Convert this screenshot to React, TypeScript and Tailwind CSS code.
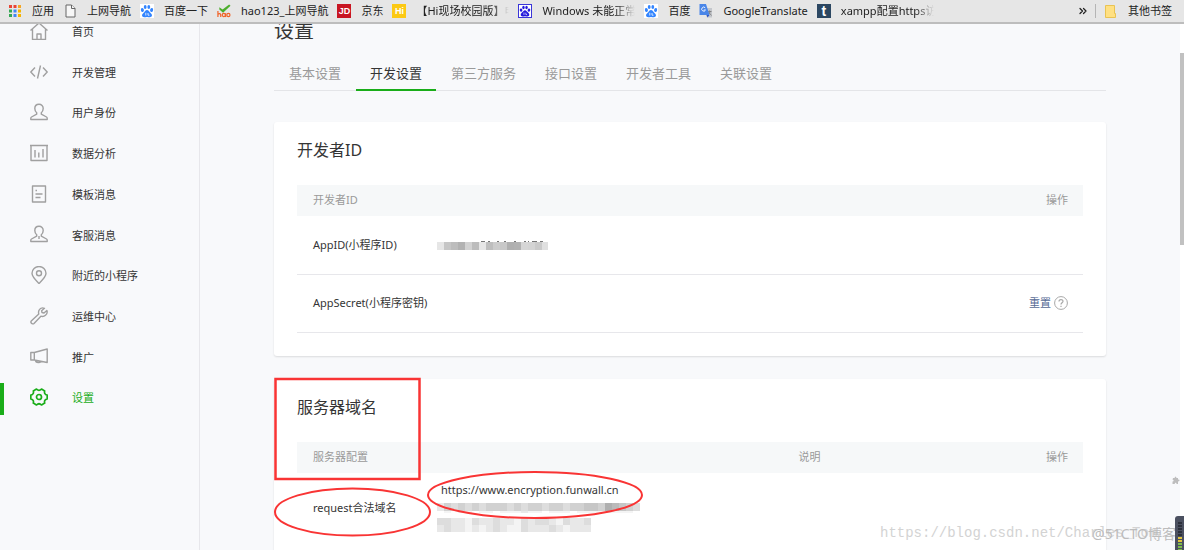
import type { ReactNode } from "react";
import { ChevronsRight } from "lucide-react";

function PawIcon({ color }: { color: string }) {
  return (
    <svg viewBox="0 0 14 14" className="size-full" fill={color}>
      <ellipse cx="2.4" cy="6" rx="1.5" ry="2" transform="rotate(-15 2.4 6)" />
      <ellipse cx="5.2" cy="3" rx="1.4" ry="2.1" />
      <ellipse cx="8.8" cy="3" rx="1.4" ry="2.1" />
      <ellipse cx="11.6" cy="6" rx="1.5" ry="2" transform="rotate(15 11.6 6)" />
      <path d="M7 6c-1.5 0-2 1.3-2.8 2.2C3.2 9.2 2 9.9 2 11.3c0 1.3 1 2 2.2 2 1 0 1.800-.3 2.800-.3s1.800.3 2.800.3c1.200 0 2.200-.7 2.200-2 0-1.400-1.200-2.100-2.200-3.100C9 7.300 8.500 6 7 6z" />
      <path d="M5.800 8.800v2.700M8 9v2.200h1.500" stroke="#fff" strokeWidth=".8" fill="none" />
    </svg>
  );
}

function AppsIcon() {
  const colors = ["#ea4335", "#ea4335", "#f5a623", "#34a853", "#4285f4", "#f5b400", "#34a853", "#4285f4", "#f5b400"];
  return (
    <svg viewBox="0 0 12 12" className="size-3">
      {colors.map((color, i) => (
        <rect key={i} x={(i % 3) * 4.5} y={Math.floor(i / 3) * 4.5} width="3" height="3" fill={color} />
      ))}
    </svg>
  );
}

function FileIcon() {
  return (
    <svg viewBox="0 0 11 14" className="h-[14px] w-[11px]" fill="#f7f7f7" stroke="#666" strokeWidth="1">
      <path d="M1 1h5.500L10 4.500V13H1z" />
      <path d="M6.500 1v3.500H10" />
    </svg>
  );
}

function HaoIcon() {
  return (
    <svg viewBox="0 0 15 14" className="size-[14px]">
      <path d="M2.500 3l3.500 2.500L13 0l1.500 1.500L6.500 9 2.500 5.500z" fill="#4cae2c" />
      <g fill="none" stroke="#f0642a" strokeWidth="1.300">
        <path d="M1 7v6.500M1 10.500q2.500-1.500 3 .5v2.500" />
        <circle cx="7.300" cy="11.300" r="1.700" />
        <path d="M9.200 9.500v4" />
        <circle cx="12.200" cy="11.300" r="1.700" />
      </g>
    </svg>
  );
}

function TranslateIcon() {
  return (
    <svg viewBox="0 0 14 14" className="size-[14px]">
      <path d="M5 4h8v9.500H8z" fill="#c4c7cc" />
      <path d="M8 7.500h4.500M10.500 6.500v1M8.500 11.500l3-4M9.500 8l3 3.500" stroke="#777" strokeWidth=".8" fill="none" />
      <path d="M.5 0h6.500L10.500 11H.5z" fill="#4a86e8" />
      <path d="M7.500 11h3L8.500 13.500z" fill="#2a56c6" />
      <path d="M6.200 3.800A2 2 0 1 0 6.500 6H4.800" stroke="#fff" strokeWidth=".9" fill="none" />
    </svg>
  );
}

function Badge({ className, children }: { className: string; children: ReactNode }) {
  return (
    <span className={`flex size-[14px] items-center justify-center font-['Liberation_Sans'] font-bold leading-none text-white ${className}`}>
      {children}
    </span>
  );
}

const bluePaw = (
  <span className="size-[14px] bg-white">
    <PawIcon color="#3385ff" />
  </span>
);

const bookmarks = [
  { label: "应用", icon: <AppsIcon /> },
  { label: "上网导航", icon: <FileIcon /> },
  { label: "百度一下", icon: bluePaw },
  { label: "hao123_上网导航", icon: <HaoIcon /> },
  { label: "京东", icon: <Badge className="bg-[#c81623] text-[9px]">JD</Badge> },
  { label: "【Hi现场校园版】申", icon: <Badge className="bg-[#fcc914] text-[9px]">Hi</Badge>, faded: true },
  {
    label: "Windows 未能正常启",
    icon: (
      <span className="size-[14px] border border-[#3a35d8] bg-white">
        <PawIcon color="#2319dc" />
      </span>
    ),
    faded: true,
  },
  { label: "百度", icon: bluePaw },
  { label: "GoogleTranslate", icon: <TranslateIcon /> },
  { label: "xampp配置https访问", icon: <Badge className="bg-[#2c4762] text-[14px]">t</Badge>, faded: true },
];

function BookmarkBar() {
  return (
    <header className="flex h-6 shrink-0 items-center border-b-2 border-[#bdbdbd] bg-[#e6e6e6] pl-2 pr-3 text-[11px] text-[#222]">
      <nav className="flex min-w-0 flex-1 items-center gap-[9px] overflow-hidden whitespace-nowrap">
        {bookmarks.map((item, i) => (
          <a key={i} href="#" className="flex shrink-0 items-center gap-[10px]">
            <span className="flex w-[14px] justify-center">{item.icon}</span>
            <span
              className={
                item.faded
                  ? "w-[93px] overflow-hidden [mask-image:linear-gradient(to_right,black_80%,transparent)]"
                  : ""
              }
            >
              {item.label}
            </span>
          </a>
        ))}
      </nav>
      <button type="button" aria-label="更多书签" className="mr-[6px]">
        <ChevronsRight className="size-3" strokeWidth={2.5} />
      </button>
      <span className="mr-[9px] h-[14px] w-px bg-[#b5b5b5]" />
      <a href="#" className="flex items-center gap-3">
        <svg viewBox="0 0 11 13" className="h-[13px] w-[11px]">
          <path d="M.5.5h9v8h1v4H.5z" fill="#ffe082" stroke="#e9c352" />
        </svg>
        其他书签
      </a>
    </header>
  );
}

const personPath =
  "M9 1.300c-2.500 0-4.200 1.800-4.200 4.200 0 1.800.8 3.200 1.900 4.200v1.500L1.500 14c-.5.300-.7.700-.7 1.200v1.300h16.400v-1.300c0-.5-.2-.9-.7-1.200l-5.200-2.800V9.700c1.100-1 1.900-2.400 1.900-4.200C13.200 3.100 11.500 1.300 9 1.300z";

const menu: { label: string; icon: ReactNode }[] = [
  { label: "首页", icon: <path d="M.5 8.500L9 1l8.500 7.500M2.500 7v10.500h13V7M7 17.500V12h4v5.500" /> },
  { label: "开发管理", icon: <path d="M5 4.500L.8 9 5 13.500M13 4.500L17.200 9 13 13.500M10.500 2.500l-3 13" /> },
  { label: "用户身份", icon: <path d={personPath} /> },
  { label: "数据分析", icon: <path d="M0 1.500h18M1 1.500v15h16v-15M5 6v7.500M8.800 8.500v5M13 5v8.500" /> },
  { label: "模板消息", icon: <path d="M2.500 1h13v16h-13zM5.500 5.500h1.500M5.500 9h7M5.500 12.500h5" /> },
  {
    label: "客服消息",
    icon: (
      <>
        <path d={personPath} />
        <path d="M9 11v3" />
      </>
    ),
  },
  {
    label: "附近的小程序",
    icon: (
      <>
        <path d="M9 17.500C5.500 14 2 10.800 2 7.300a7 6.800 0 0 1 14 0c0 3.500-3.500 6.700-7 10.200z" />
        <circle cx="9" cy="7.300" r="2.500" />
      </>
    ),
  },
  {
    label: "运维中心",
    icon: <path d="M14.500 1.300c-2.200-.8-4.500 0-5.500 2-.6 1.300-.6 2.500-.2 3.700L1.500 13.700c-1.600 1.600.8 4.300 2.500 2.700l6.900-7.200c1.500.5 3.300.2 4.600-.9 1.500-1.300 2-3.200 1.400-4.900L14 6l-2-.5-.4-1.800z" />,
  },
  {
    label: "推广",
    icon: <path d="M.8 5.500h3.500v7.500H.8zM4.300 5.500L17.200 2v13.500L4.300 13M5.500 13.200c0 1.400 1.200 2.300 2.800 2.300 1.400 0 2.300-.5 2.700-1.200" />,
  },
  {
    label: "设置",
    icon: (
      <>
        <path d="M17.200 7.100v3.800Q13.800 11.800 14.700 15.100L11.500 17Q9 14.500 6.500 17L3.300 15.100Q4.200 11.800.8 10.900V7.100Q4.200 6.200 3.300 2.900L6.500 1Q9 3.500 11.500 1L14.700 2.900Q13.800 6.200 17.200 7.100z" />
        <circle cx="9" cy="9" r="2.500" />
      </>
    ),
  },
];

function Sidebar() {
  return (
    <aside className="w-[200px] shrink-0 border-r border-[#e7e7eb]">
      <nav className="-mt-3 grid h-[407px] auto-rows-fr text-[11px]">
        {menu.map((item) => {
          const active = item.label === "设置";
          return (
            <a key={item.label} href="#" className={`flex items-center ${active ? "text-[#1aad19]" : "text-[#353535]"}`}>
              <span className={`h-8 w-1 ${active ? "bg-[#1aad19]" : ""}`} />
              <svg
                viewBox="0 0 18 18"
                fill="none"
                stroke="currentColor"
                strokeWidth={active ? 1.7 : 1.4}
                strokeLinejoin="round"
                className={`mb-[3px] ml-[26px] mr-6 size-[18px] ${active ? "" : "text-[#a0a0a0]"}`}
              >
                {item.icon}
              </svg>
              {item.label}
            </a>
          );
        })}
      </nav>
    </aside>
  );
}

const tabs = ["基本设置", "开发设置", "第三方服务", "接口设置", "开发者工具", "关联设置"];

const appIdGreys = ["#e6e6e6", "#c6c6c6", "#bdbdbd", "#b2b2b2", "#d2d2d2", "#bcbcbc", "#e6e6e6", "#bebebe", "#cccccc", "#c8c8c8", "#b0b0b0", "#b2b2b2", "#d6d6d6", "#d4d4d4", "#cacaca", "#e0e0e0"];

// one digit per block, 0 is white and 9 the darkest
const domainBlocks = ["24343434443434434434455476543", "01011011011121101110111111110"];
const secondBlocks = ["3322132232213233213223", "2322121232113222321222"];

// Pixelated strip that covers private values
function Mosaic({ rows, heights }: { rows: string[]; heights: number[] }) {
  return (
    <div>
      {rows.map((row, y) => (
        <svg key={y} width={row.length * 7} height={heights[y]} className="block" shapeRendering="crispEdges">
          {row.split("").map((level, x) => (
            <rect key={x} x={x * 7} y="0" width="7" height={heights[y]} fill={`hsl(0 0% ${100 - Number(level) * 4.5}%)`} />
          ))}
        </svg>
      ))}
    </div>
  );
}

function Card({ title, children }: { title: string; children: ReactNode }) {
  return (
    <section className="rounded-[3px] bg-white px-[23px] pb-[23px] shadow-[0_1px_2px_rgba(0,0,0,0.12)]">
      <h3 className="py-4 text-[16px] leading-6 text-[#353535]">{title}</h3>
      {children}
    </section>
  );
}

function DeveloperId() {
  return (
    <Card title="开发者ID">
      <table className="mt-[7px] w-full table-fixed text-left text-[11px]">
        <thead className="bg-[#f6f8f9] text-[#9a9a9a]">
          <tr className="h-[31px]">
            <th className="w-[124px] pl-4 font-normal">开发者ID</th>
            <th />
            <th className="w-[120px] pr-[15px] text-right font-normal">操作</th>
          </tr>
        </thead>
        <tbody className="text-[#353535]">
          <tr className="h-[58px] border-b border-[#e7e7eb]">
            <td className="whitespace-nowrap pl-4">AppID(小程序ID)</td>
            <td className="pl-4">
              <svg width="111" height="10" className="block" shapeRendering="crispEdges">
                {appIdGreys.map((color, i) => (
                  <rect key={i} x={i * 7} y="2" width="7" height="8" fill={color} />
                ))}
                <path d="M44 1.500h4M51 1.500h2M60 1.500h2M67 1.500h2M77 1.500h2M87 1.500h2M91 1.500h1M95 1.500h5M103 1.500h3" stroke="#777" />
              </svg>
            </td>
            <td />
          </tr>
          <tr className="h-[58px] border-b border-[#e7e7eb]">
            <td className="whitespace-nowrap pl-4">AppSecret(小程序密钥)</td>
            <td />
            <td className="pr-[15px]">
              <div className="flex items-center justify-end gap-[3px]">
                <a href="#" className="text-[#576b95]">重置</a>
                <button type="button" aria-label="帮助" className="text-[#a8a8a8]">
                  <svg viewBox="0 0 14 14" className="size-[14px]" fill="none" stroke="currentColor">
                    <circle cx="7" cy="7" r="6.400" />
                    <path d="M5 5.500c0-2.500 4-2.500 4-.2C9 6.800 7 6.800 7 8.500M7 9.800v1.200" strokeWidth="1.200" />
                  </svg>
                </button>
              </div>
            </td>
          </tr>
        </tbody>
      </table>
    </Card>
  );
}

function ServerDomains() {
  return (
    <Card title="服务器域名">
      <table className="mt-[7px] w-full table-fixed text-left text-[11px]">
        <thead className="bg-[#f6f8f9] text-[#9a9a9a]">
          <tr className="h-[31px]">
            <th className="w-[124px] pl-4 font-normal">服务器配置</th>
            <th className="w-[46%]" />
            <th className="pl-4 font-normal">说明</th>
            <th className="w-[120px] pr-[15px] text-right font-normal">操作</th>
          </tr>
        </thead>
        <tbody className="text-[#353535]">
          <tr className="align-top">
            <td className="whitespace-nowrap pl-4 pt-[26px] leading-[18px]">request合法域名</td>
            <td className="pb-5 pl-4 pt-2">
              <p className="pl-1 leading-[18px]">https://www.encryption.funwall.cn</p>
              <div className="mt-1 flex flex-col gap-[5px]">
                <Mosaic rows={domainBlocks} heights={[8, 2]} />
                <Mosaic rows={secondBlocks} heights={[7, 7]} />
              </div>
            </td>
            <td />
            <td />
          </tr>
        </tbody>
      </table>
    </Card>
  );
}

function Markup() {
  return (
    <svg className="pointer-events-none absolute left-0 top-0 h-[160px] w-[372px] overflow-visible" fill="none" stroke="#f93434" strokeWidth="2.500">
      <rect x="1.500" y="0" width="144" height="100" />
      <ellipse cx="78.500" cy="133" rx="77.500" ry="23.500" strokeWidth="2" />
      <ellipse cx="261" cy="116" rx="107" ry="23" strokeWidth="2" />
    </svg>
  );
}

export default function App() {
  return (
    <div className="relative flex h-screen flex-col overflow-hidden bg-[#f8f9fb] font-['Noto_Sans','Noto_Sans_CJK_SC',sans-serif]">
      <BookmarkBar />
      <div className="flex min-h-0 flex-1 overflow-hidden">
        <Sidebar />
        <main className="min-w-0 flex-1 px-[74px]">
          <h2 className="-mt-2 text-[20px] leading-[30px] text-[#353535]">设置</h2>
          <nav className="mt-3 flex h-[33px] gap-px border-b border-[#e4e5e8] pl-px text-[13px]">
            {tabs.map((tab) => (
              <a
                key={tab}
                href="#"
                className={`flex h-[33px] items-center border-b-2 px-[14px] ${
                  tab === "开发设置" ? "border-[#1aad19] text-[#353535]" : "border-transparent text-[#9a9a9a]"
                }`}
              >
                {tab}
              </a>
            ))}
          </nav>
          <div className="mt-[31px] flex flex-col gap-[23px]">
            <DeveloperId />
            <div className="relative">
              <ServerDomains />
              <Markup />
            </div>
          </div>
        </main>
        <div className="w-1 shrink-0 bg-white pt-[29px]">
          <div className="h-48 bg-[#c1c1c1]" />
        </div>
      </div>

      <svg viewBox="0 0 8 8" className="absolute bottom-[66px] right-1 size-2" fill="#bdbdbd">
        <path d="M1 2h1.800C2.200.2 4.800.2 4.300 2H6v1.700c2-.6 2 2.200 0 1.600V8H4.500c.3-1.700-2-1.700-1.700 0H.5V5.500C2 5.800 2 3.500.5 3.800z" />
      </svg>
      <p className="absolute bottom-[7px] right-0 w-[304px] overflow-hidden whitespace-nowrap font-['Liberation_Mono'] text-[14px] leading-5 text-[#d3d3d3]">
        https://blog.csdn.net/Charles_Tom
      </p>
      <p className="absolute bottom-[6px] right-2 whitespace-nowrap text-[14px] leading-5 text-[#bcbcbc]">@51CTO博客</p>
      <div className="absolute bottom-0 right-0 flex h-[34px] w-[9px] flex-col items-center gap-px rounded-tl-[3px] bg-[#4b5060] pt-[6px]">
        {Array.from({ length: 10 }, (_, i) => (
          <span key={i} className={`h-[2px] w-1 shrink-0 ${i < 5 ? "bg-[#2c303b]" : i < 7 ? "bg-[#e0c53c]" : "bg-[#7dbb4c]"}`} />
        ))}
      </div>
    </div>
  );
}
